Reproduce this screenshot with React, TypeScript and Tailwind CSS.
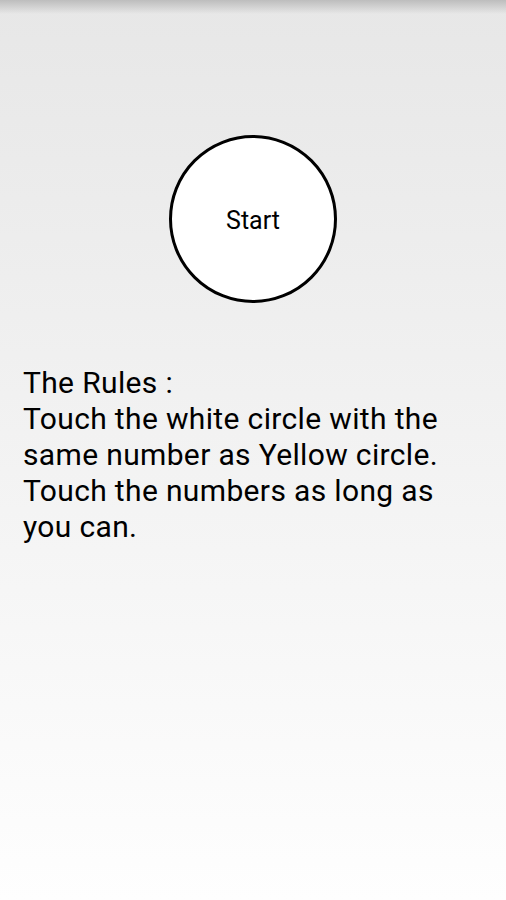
const rules = [
    'The Rules :',
    'Touch the white circle with the',
    'same number as Yellow circle.',
    'Touch the numbers as long as',
    'you can.',
]

export default function App() {
    return (
        <div className="relative h-[900px] w-full overflow-hidden bg-gradient-to-b from-[#e7e7e7] to-[#fefefe] font-['Roboto',sans-serif] text-black">
            {/* shadow under the missing action bar */}
            <div className="pointer-events-none absolute inset-x-0 top-0 h-[14px] bg-gradient-to-b from-[#bdbdbd] to-transparent" />

            <div className="flex justify-center pt-[135px]">
                <button className="flex h-[168px] w-[168px] items-center justify-center rounded-full border-[3px] border-black bg-white pt-[4px] text-[25px]">
                    Start
                </button>
            </div>

            <div className="mt-[62px] px-[23px] text-[30px] leading-[36px] tracking-[0.35px] whitespace-nowrap">
                {rules.map((line) => (
                    <p key={line}>{line}</p>
                ))}
            </div>
        </div>
    )
}
